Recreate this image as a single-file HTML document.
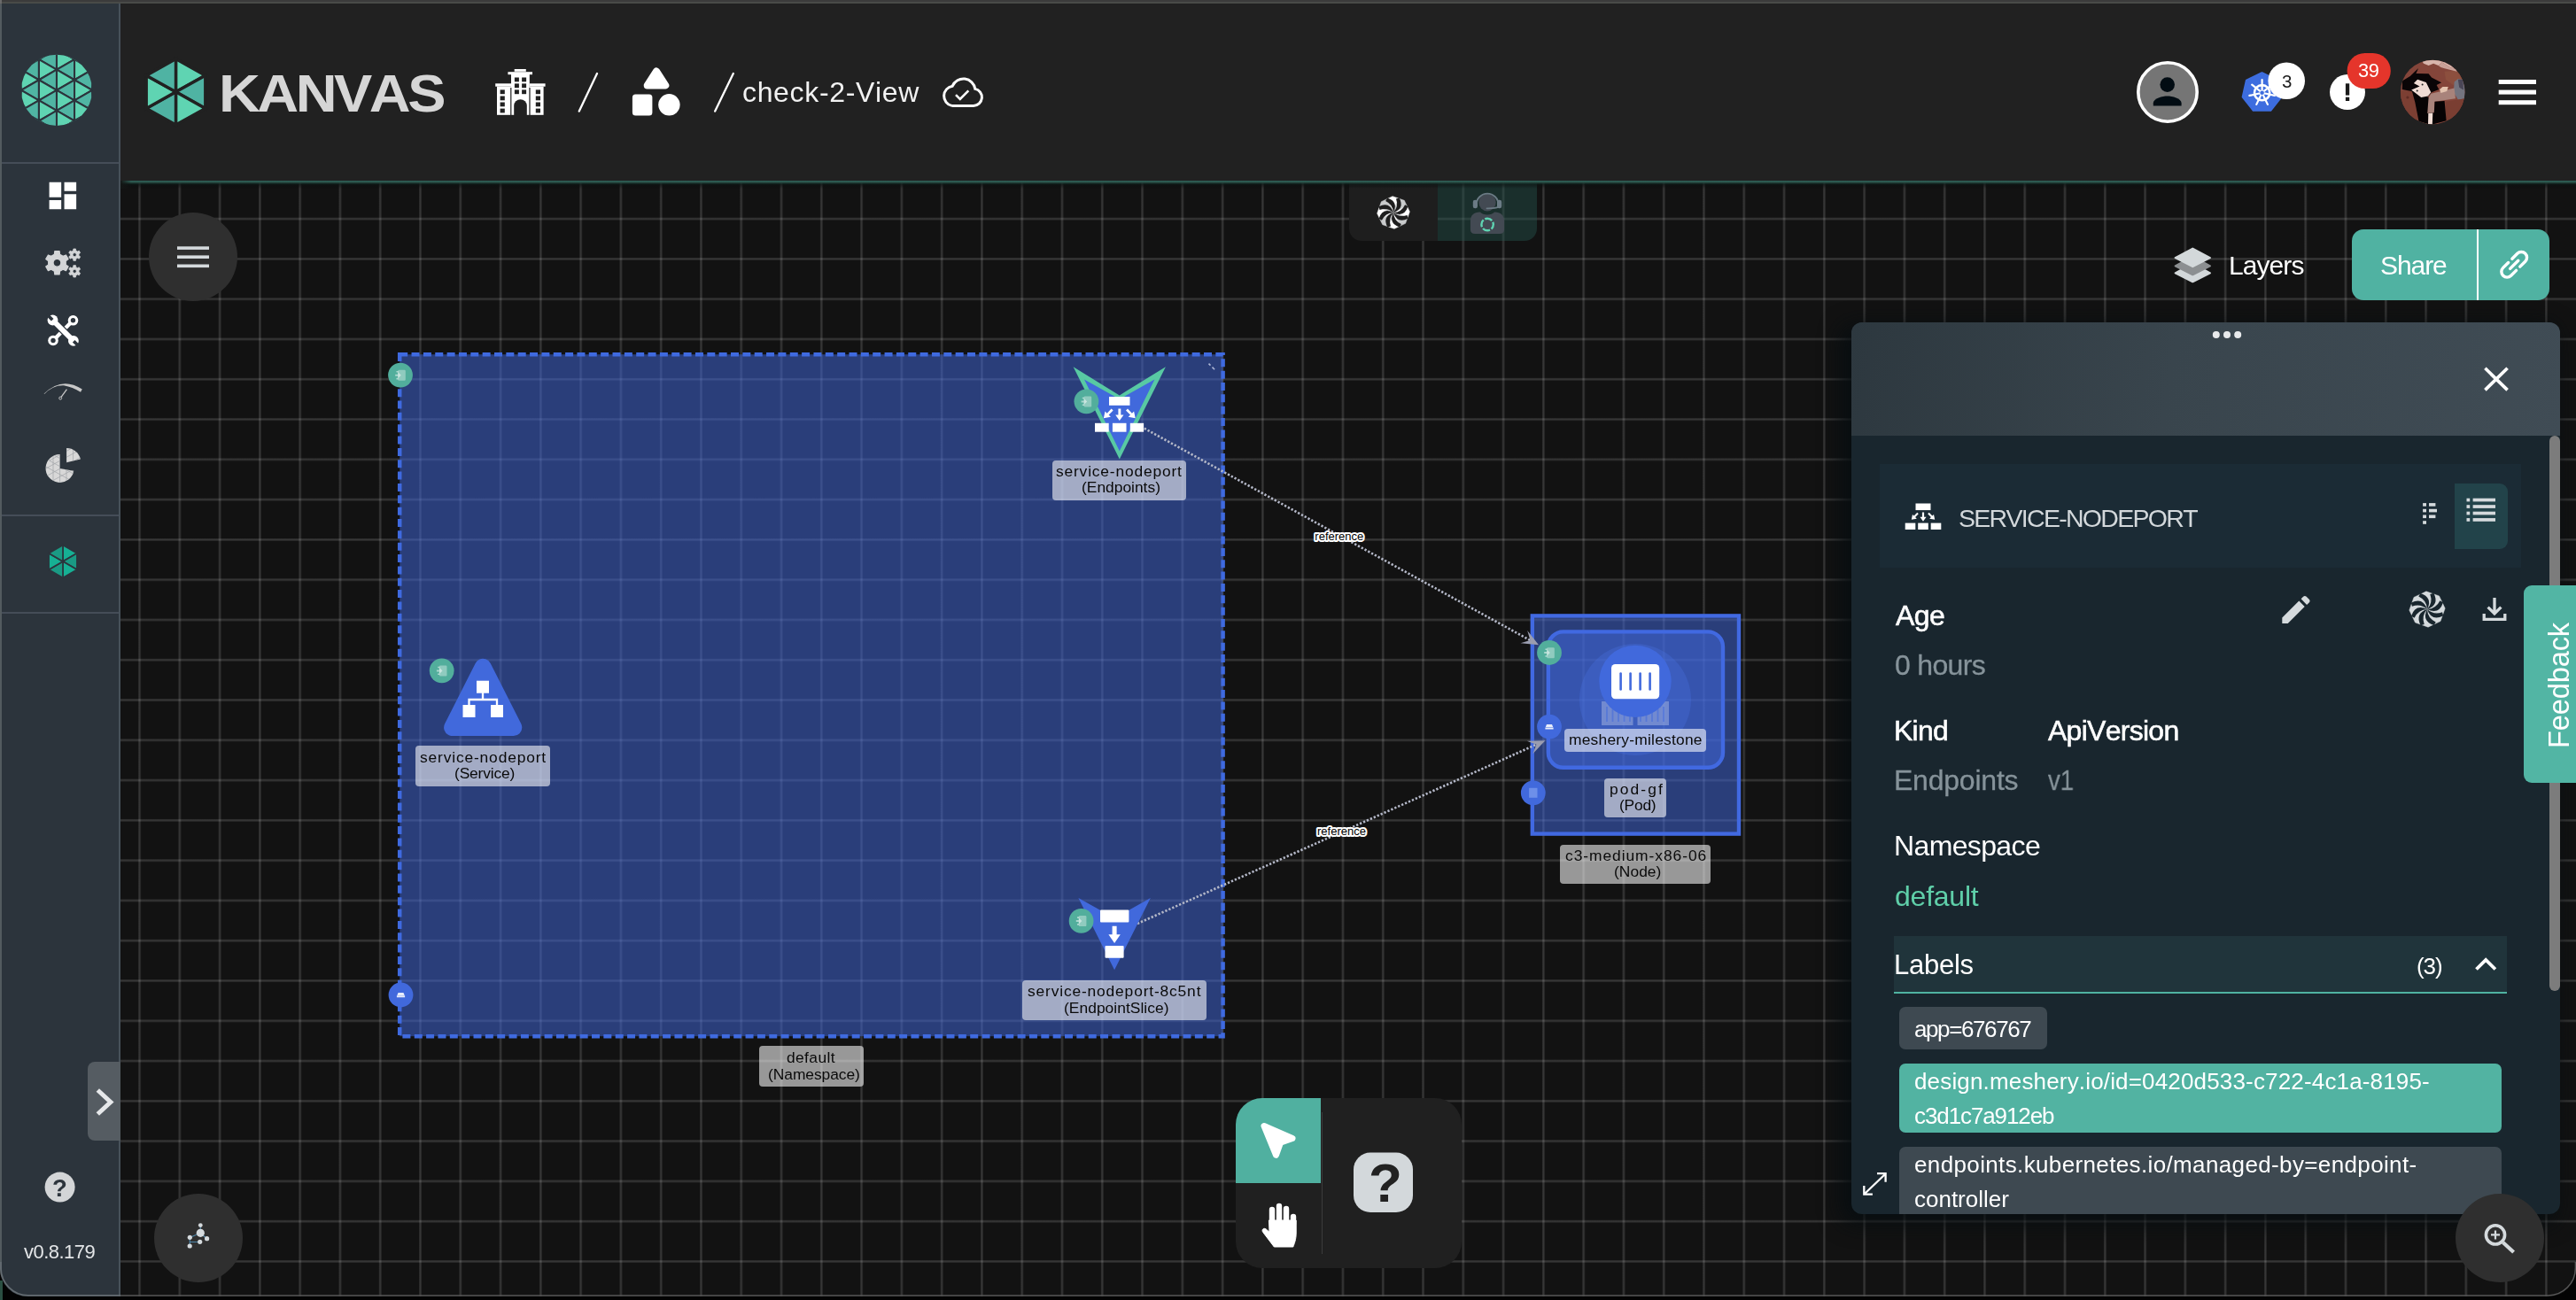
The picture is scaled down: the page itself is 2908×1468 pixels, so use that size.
<!DOCTYPE html><html><head><meta charset="utf-8"><title>Kanvas</title><style>
*{box-sizing:border-box}
html,body{margin:0;padding:0}
body{width:2908px;height:1468px;overflow:hidden;background:#030303;position:relative;font-family:'Liberation Sans',sans-serif;font-kerning:none}
.a{position:absolute}
.t{position:absolute;white-space:pre;line-height:1;font-kerning:none;will-change:transform}
svg{position:absolute;overflow:visible}
#win{position:absolute;left:0;top:0;width:2908px;height:1463.6px;overflow:hidden;background:#121212;border-radius:0 0 31px 31px}
#grid{position:absolute;left:136px;top:203px;width:2772px;height:1261px;background-color:#121212;
 background-image:linear-gradient(to right,rgba(255,255,255,.03) 0,rgba(255,255,255,.152) .7px,rgba(255,255,255,.152) 2.1px,rgba(255,255,255,.03) 2.8px,transparent 2.9px),linear-gradient(to bottom,rgba(255,255,255,.03) 0,rgba(255,255,255,.152) .7px,rgba(255,255,255,.152) 2.1px,rgba(255,255,255,.03) 2.8px,transparent 2.9px);
 background-size:45.285px 45.285px;background-position:20.15px 42.75px}
.lbl{position:absolute;background:rgba(255,255,255,.57);border-radius:4px}
</style></head><body><div id="win"><div id="grid"></div><svg class="a" style="left:0;top:0" width="2908" height="1468" viewBox="0 0 2908 1468"><rect x="451.2" y="400.2" width="929.4" height="770" fill="rgba(65,105,225,.5)" stroke="#3f6ae0" stroke-width="4.5" stroke-dasharray="9 4.35"/><path d="M1364.5 410.6l2 2M1368.5 414.6l2.6 2.6" stroke="#aab4d4" stroke-width="1.6"/><rect x="1729.8" y="695.4" width="233.2" height="246.2" fill="rgba(65,105,225,.5)" stroke="#4169e1" stroke-width="4.4"/><rect x="1747.8" y="713.4" width="197.2" height="153.4" rx="17" fill="rgba(65,105,225,.5)" stroke="#4169e1" stroke-width="4.4"/><circle cx="1846" cy="790" r="63" fill="rgba(75,120,235,.28)"/><g fill="rgba(255,255,255,.28)"><rect x="1808" y="792" width="35.5" height="27"/><rect x="1848.5" y="792" width="35.5" height="27"/></g><g stroke="rgba(65,105,220,.55)" stroke-width="1.8"><path d="M1814 798v17"/><path d="M1820.5 798v17"/><path d="M1827 798v17"/><path d="M1833.5 798v17"/><path d="M1840 798v17"/><path d="M1852 798v17"/><path d="M1858.5 798v17"/><path d="M1865 798v17"/><path d="M1871.5 798v17"/><path d="M1878 798v17"/></g><circle cx="1846" cy="769.4" r="40.7" fill="#4169dc"/><rect x="1819" y="750" width="54.2" height="39.3" rx="4.5" fill="#fff"/><g stroke="#4169dc" stroke-width="2.6" stroke-linecap="round"><path d="M1829.6 760.5v18"/><path d="M1840.6 760.5v18"/><path d="M1851.6 760.5v18"/><path d="M1862.6 760.5v18"/></g><line x1="1280.5" y1="477.5" x2="1729.1" y2="724.0" stroke="#b4b8c8" stroke-width="2.6" stroke-dasharray="2.3 2"/><polygon points="1737.0,728.3 1724.2,712.1 1727.4,723.0 1716.5,726.2" fill="#9a9db0"/><line x1="1284" y1="1043" x2="1736.2" y2="839.9" stroke="#b4b8c8" stroke-width="2.6" stroke-dasharray="2.3 2"/><polygon points="1744.4,836.2 1723.8,836.7 1734.4,840.7 1730.3,851.3" fill="#9a9db0"/><polygon points="1211.6,414.3 1263.8,446.4 1315.9,414.3 1263.8,518.4" fill="#58c9a3"/><polygon points="1224,428.4 1263.8,450.8 1303.4,428.4 1263.8,509.2" fill="#4169dc"/><g fill="#fff"><rect x="1252" y="448" width="23.5" height="9.8"/><rect x="1236" y="477.8" width="15.7" height="9.9"/><rect x="1255.9" y="477.8" width="15.6" height="9.9"/><rect x="1275.8" y="477.8" width="15.3" height="9.9"/><path d="M1262.4 461.5h2.9v7h3.2l-4.7 6.6l-4.6-6.6h3.2z"/><path d="M1254.6 461.6l2 2l-5 5l2.3 2.2l-8 1.5l1.6-7.8l2.2 2.2z"/><path d="M1273 461.6l-2 2l5 5l-2.3 2.2l8 1.5l-1.6-7.8l-2.2 2.2z"/></g><polygon points="545.2,753.2 510.6,821.6 579.8,821.6" fill="#4169dc" stroke="#4169dc" stroke-width="19" stroke-linejoin="round"/><g fill="#fff"><rect x="538" y="768.7" width="14" height="14"/><rect x="522.5" y="796" width="14" height="14"/><rect x="554" y="796" width="14" height="14"/></g><path d="M545 782v8M529.5 797v-7h31.5v7" stroke="#fff" stroke-width="2.3" fill="none"/><polygon points="1217.4,1014 1258.1,1036.8 1298.8,1014 1258.1,1095.2" fill="#4169dc"/><g fill="#fff"><rect x="1242" y="1027.4" width="32.4" height="14" rx="1"/><rect x="1247.5" y="1067.9" width="21.1" height="13.8" rx="1"/><path d="M1255.6 1045.7h5v9.5h4.2l-6.7 9.8l-6.7-9.8h4.2z"/></g><circle cx="452" cy="423.6" r="13.9" fill="#52ae9c"/><path d="M450.4 417.8h6.2a1.2 1.2 0 0 1 1.2 1.2v9.6a1.2 1.2 0 0 1-1.2 1.2h-6.2a1.2 1.2 0 0 1-1.2-1.2v-9.6a1.2 1.2 0 0 1 1.2-1.2z" fill="rgba(255,255,255,.36)"/><path d="M446.2 422.70000000000005h3v-2.6l3.6 3.6l-3.6 3.6v-2.6h-3z M447.4 419.0h2.4v1.6h-2.4z M447.4 426.8h2.4v1.6h-2.4z" fill="rgba(255,255,255,.5)"/><circle cx="1226.4" cy="453.3" r="13.9" fill="#52ae9c"/><path d="M1224.8000000000002 447.5h6.2a1.2 1.2 0 0 1 1.2 1.2v9.6a1.2 1.2 0 0 1-1.2 1.2h-6.2a1.2 1.2 0 0 1-1.2-1.2v-9.6a1.2 1.2 0 0 1 1.2-1.2z" fill="rgba(255,255,255,.36)"/><path d="M1220.6000000000001 452.40000000000003h3v-2.6l3.6 3.6l-3.6 3.6v-2.6h-3z M1221.8000000000002 448.7h2.4v1.6h-2.4z M1221.8000000000002 456.5h2.4v1.6h-2.4z" fill="rgba(255,255,255,.5)"/><circle cx="498.7" cy="757.3" r="13.9" fill="#52ae9c"/><path d="M497.09999999999997 751.5h6.2a1.2 1.2 0 0 1 1.2 1.2v9.6a1.2 1.2 0 0 1-1.2 1.2h-6.2a1.2 1.2 0 0 1-1.2-1.2v-9.6a1.2 1.2 0 0 1 1.2-1.2z" fill="rgba(255,255,255,.36)"/><path d="M492.9 756.4h3v-2.6l3.6 3.6l-3.6 3.6v-2.6h-3z M494.09999999999997 752.6999999999999h2.4v1.6h-2.4z M494.09999999999997 760.5h2.4v1.6h-2.4z" fill="rgba(255,255,255,.5)"/><circle cx="1220.6" cy="1039.9" r="13.9" fill="#52ae9c"/><path d="M1219.0 1034.1000000000001h6.2a1.2 1.2 0 0 1 1.2 1.2v9.6a1.2 1.2 0 0 1-1.2 1.2h-6.2a1.2 1.2 0 0 1-1.2-1.2v-9.6a1.2 1.2 0 0 1 1.2-1.2z" fill="rgba(255,255,255,.36)"/><path d="M1214.8 1039.0h3v-2.6l3.6 3.6l-3.6 3.6v-2.6h-3z M1216.0 1035.3000000000002h2.4v1.6h-2.4z M1216.0 1043.1000000000001h2.4v1.6h-2.4z" fill="rgba(255,255,255,.5)"/><circle cx="1749" cy="737" r="13.9" fill="#52ae9c"/><path d="M1747.4 731.2h6.2a1.2 1.2 0 0 1 1.2 1.2v9.6a1.2 1.2 0 0 1-1.2 1.2h-6.2a1.2 1.2 0 0 1-1.2-1.2v-9.6a1.2 1.2 0 0 1 1.2-1.2z" fill="rgba(255,255,255,.36)"/><path d="M1743.2 736.1h3v-2.6l3.6 3.6l-3.6 3.6v-2.6h-3z M1744.4 732.4h2.4v1.6h-2.4z M1744.4 740.2h2.4v1.6h-2.4z" fill="rgba(255,255,255,.5)"/><circle cx="1749" cy="820.6" r="13.9" fill="#4169dc"/><path d="M1746 818.0h6l1.2 3h-8.4z M1744.4 821.4h9.2v2h-9.2z" fill="#e8edfb"/><circle cx="1730.8" cy="895.3" r="13.9" fill="#4169dc"/><rect x="1726.1" y="889.8" width="9.4" height="11" fill="#6d8fe9"/><circle cx="452.5" cy="1123.5" r="13.9" fill="#4169dc"/><path d="M449.5 1120.9h6l1.2 3h-8.4z M447.9 1124.3h9.2v2h-9.2z" fill="#e8edfb"/><text x="1511.8" y="609.5" text-anchor="middle" font-family="Liberation Sans, sans-serif" font-size="13" fill="#000" stroke="#fff" stroke-width="4" stroke-linejoin="round" paint-order="stroke">reference</text><text x="1514.5" y="943.3" text-anchor="middle" font-family="Liberation Sans, sans-serif" font-size="13" fill="#000" stroke="#fff" stroke-width="4" stroke-linejoin="round" paint-order="stroke">reference</text></svg><div class="lbl" style="left:1188px;top:520.2px;width:151.2px;height:44.8px"></div><div class="t" style="left:1192.40px;top:524.47px;font-size:17.4px;color:#0a0a0a;font-weight:400;letter-spacing:0.821px;">service-nodeport</div><div class="t" style="left:1221.20px;top:542.47px;font-size:17.4px;color:#0a0a0a;font-weight:400;letter-spacing:0.001px;">(Endpoints)</div><div class="lbl" style="left:469px;top:842px;width:151.8px;height:45.5px"></div><div class="t" style="left:473.70px;top:847.47px;font-size:17.4px;color:#0a0a0a;font-weight:400;letter-spacing:0.841px;">service-nodeport</div><div class="t" style="left:513.00px;top:865.47px;font-size:17.4px;color:#0a0a0a;font-weight:400;letter-spacing:-0.162px;">(Service)</div><div class="lbl" style="left:1154px;top:1107px;width:208.0px;height:44.7px"></div><div class="t" style="left:1159.70px;top:1111.47px;font-size:17.4px;color:#0a0a0a;font-weight:400;letter-spacing:0.838px;">service-nodeport-8c5nt</div><div class="t" style="left:1201.20px;top:1129.77px;font-size:17.4px;color:#0a0a0a;font-weight:400;letter-spacing:0.036px;">(EndpointSlice)</div><div class="lbl" style="left:857px;top:1181.3px;width:117.9px;height:45.9px"></div><div class="t" style="left:888.40px;top:1186.07px;font-size:17.4px;color:#0a0a0a;font-weight:400;letter-spacing:0.385px;">default</div><div class="t" style="left:866.50px;top:1204.67px;font-size:17.4px;color:#0a0a0a;font-weight:400;letter-spacing:-0.049px;">(Namespace)</div><div class="lbl" style="left:1766px;top:822.5px;width:160.4px;height:26.3px"></div><div class="t" style="left:1771.10px;top:826.57px;font-size:17.4px;color:#0a0a0a;font-weight:400;letter-spacing:0.226px;">meshery-milestone</div><div class="lbl" style="left:1811.2px;top:878.7px;width:70.1px;height:44.3px"></div><div class="t" style="left:1816.50px;top:883.37px;font-size:17.4px;color:#0a0a0a;font-weight:400;letter-spacing:2.082px;">pod-gf</div><div class="t" style="left:1827.80px;top:900.77px;font-size:17.4px;color:#0a0a0a;font-weight:400;letter-spacing:-0.223px;">(Pod)</div><div class="lbl" style="left:1761.4px;top:953.5px;width:169.7px;height:44.8px"></div><div class="t" style="left:1766.90px;top:958.07px;font-size:17.4px;color:#0a0a0a;font-weight:400;letter-spacing:0.947px;">c3-medium-x86-06</div><div class="t" style="left:1822.30px;top:975.57px;font-size:17.4px;color:#0a0a0a;font-weight:400;letter-spacing:0.042px;">(Node)</div><div class="a" style="left:168px;top:240px;width:100px;height:100px;border-radius:50%;background:#2f2f2f"></div><div class="a" style="left:174px;top:1348px;width:100px;height:100px;border-radius:50%;background:#2f2f2f"></div><svg class="a" style="left:0;top:0" width="2908" height="1468" viewBox="0 0 2908 1468"><g fill="#d5dadd"><rect x="200" y="278.3" width="36" height="3.6"/><rect x="200" y="288.4" width="36" height="3.6"/><rect x="200" y="298.5" width="36" height="3.6"/></g><g stroke="#4f86a8" stroke-width="1.2" fill="none"><path d="M226.3 1392.3l0-8.5M226.3 1392.3l-12 5.2M226.3 1392.3l7 6.5M214.3 1397.5v9.5M214.3 1402.5h11.5"/></g><g fill="#d5dadd"><circle cx="226.3" cy="1392.3" r="4.6"/><circle cx="226.3" cy="1383.6" r="2.4"/><circle cx="214.3" cy="1397.3" r="2.6"/><circle cx="233.6" cy="1398.7" r="2.6"/><circle cx="225.7" cy="1402.3" r="2.6"/><circle cx="214.2" cy="1407" r="2.6"/></g></svg><div class="a" style="left:1523px;top:207px;width:100px;height:65px;background:#1e1e1e;border-radius:0 0 0 14px"></div><div class="a" style="left:1623px;top:207px;width:112px;height:65px;background:rgba(38,88,80,.42);border-radius:0 0 14px 0"></div><svg class="a" style="left:0;top:0" width="2908" height="1468" viewBox="0 0 2908 1468"><polygon points="1573.00,240.00 1565.68,224.66 1572.04,221.63 1578.67,223.98" fill="#ffffff" stroke="#ffffff" stroke-width="0.5"/><polygon points="1573.00,240.00 1578.67,223.98 1585.31,226.33 1588.34,232.68" fill="#c9cbcc" stroke="#c9cbcc" stroke-width="0.5"/><polygon points="1573.00,240.00 1588.34,232.68 1591.37,239.04 1589.02,245.67" fill="#ffffff" stroke="#ffffff" stroke-width="0.5"/><polygon points="1573.00,240.00 1589.02,245.67 1586.67,252.31 1580.32,255.34" fill="#c9cbcc" stroke="#c9cbcc" stroke-width="0.5"/><polygon points="1573.00,240.00 1580.32,255.34 1573.96,258.37 1567.33,256.02" fill="#ffffff" stroke="#ffffff" stroke-width="0.5"/><polygon points="1573.00,240.00 1567.33,256.02 1560.69,253.67 1557.66,247.32" fill="#c9cbcc" stroke="#c9cbcc" stroke-width="0.5"/><polygon points="1573.00,240.00 1557.66,247.32 1554.63,240.96 1556.98,234.33" fill="#ffffff" stroke="#ffffff" stroke-width="0.5"/><polygon points="1573.00,240.00 1556.98,234.33 1559.33,227.69 1565.68,224.66" fill="#c9cbcc" stroke="#c9cbcc" stroke-width="0.5"/><path d="M1579.69 223.45Q1585.90 235.59 1573.00 240.00Q1579.21 233.15 1576.02 224.47Z" fill="#1e1e1e"/><path d="M1589.43 233.03Q1585.24 246.00 1573.00 240.00Q1582.23 239.54 1586.12 231.15Z" fill="#1e1e1e"/><path d="M1589.55 246.69Q1577.41 252.90 1573.00 240.00Q1579.85 246.21 1588.53 243.02Z" fill="#1e1e1e"/><path d="M1579.97 256.43Q1567.00 252.24 1573.00 240.00Q1573.46 249.23 1581.85 253.12Z" fill="#1e1e1e"/><path d="M1566.31 256.55Q1560.10 244.41 1573.00 240.00Q1566.79 246.85 1569.98 255.53Z" fill="#1e1e1e"/><path d="M1556.57 246.97Q1560.76 234.00 1573.00 240.00Q1563.77 240.46 1559.88 248.85Z" fill="#1e1e1e"/><path d="M1556.45 233.31Q1568.59 227.10 1573.00 240.00Q1566.15 233.79 1557.47 236.98Z" fill="#1e1e1e"/><path d="M1566.03 223.57Q1579.00 227.76 1573.00 240.00Q1572.54 230.77 1564.15 226.88Z" fill="#1e1e1e"/><g><circle cx="1679" cy="228.7" r="9.7" fill="#434a53"/><path d="M1666.7 231a12.4 12.4 0 0 1 24.8 0" fill="none" stroke="#6b7b85" stroke-width="1.9"/><rect x="1662.8" y="225.7" width="5.2" height="9.6" rx="2.4" fill="#6b7b85"/><rect x="1690" y="225.7" width="5.2" height="9.6" rx="2.4" fill="#6b7b85"/><path d="M1691.5 233.8q-3 1.6-13 1.5" fill="none" stroke="#6b7b85" stroke-width="1.8" stroke-linecap="round"/><path d="M1659.9 259v-9c0-7 4-10.5 10.5-10.5h0.6a9.3 6.2 0 0 0 16 0h0.6c6.5 0 10.5 3.5 10.5 10.5v9c0 3.4-1.8 5-5 5h-28.200000000000003c-3.2 0-5-1.6-5-5z" fill="#434a53"/><circle cx="1679.1" cy="253.5" r="6.7" fill="none" stroke="#5fd4b2" stroke-width="2.4" stroke-dasharray="8.6 1.9" stroke-dashoffset="3"/></g></svg><div class="a" style="left:2654.9px;top:258.9px;width:223.2px;height:80px;background:#50b2a2;border-radius:13px"></div><div class="a" style="left:2796px;top:258.9px;width:2.4px;height:80px;background:#fff"></div><div class="t" style="left:2516.40px;top:284.71px;font-size:30px;color:#fff;font-weight:400;letter-spacing:-0.920px;">Layers</div><div class="t" style="left:2687.20px;top:284.71px;font-size:30px;color:#fff;font-weight:400;letter-spacing:-1.075px;">Share</div><svg class="a" style="left:0;top:0" width="2908" height="1468" viewBox="0 0 2908 1468"><path d="M2475.3 297.5l-19.7 10.8l19.7 10l19.7-10z" fill="#d3d8da" stroke="#d3d8da" stroke-width="2" stroke-linejoin="round"/><path d="M2475.3 289.5l-19.7 10.8l19.7 10l19.7-10z" fill="#8c8f91" stroke="#8c8f91" stroke-width="2" stroke-linejoin="round"/><path d="M2475.3 280.6l-19.7 10.6l19.7 10l19.7-10z" fill="#d3d8da" stroke="#d3d8da" stroke-width="2" stroke-linejoin="round"/><g transform="translate(2838.2 298.8) rotate(-45)" fill="none" stroke="#fff" stroke-width="3.4" stroke-linecap="round"><path d="M-3 -6.3h-8.4a6.3 6.3 0 0 0 0 12.6h8.4"/><path d="M3 -6.3h8.4a6.3 6.3 0 0 1 0 12.6h-8.4"/><path d="M-6.5 0h13"/></g></svg><div class="a" style="left:1395px;top:1239.8px;width:255.3px;height:192.2px;background:#202020;border-radius:30px;overflow:hidden"><div class="a" style="left:0;top:0;width:96px;height:96.2px;background:#50b0a0"></div><div class="a" style="left:96.6px;top:16px;width:1.4px;height:160px;background:#3c3c3c"></div></div><svg class="a" style="left:0;top:0" width="2908" height="1468" viewBox="0 0 2908 1468"><path d="M1427 1271.5l32 14l-13.5 4.8l-5 14z" fill="#fff" stroke="#fff" stroke-width="7" stroke-linejoin="round"/><rect x="1528" y="1301.6" width="67" height="67.4" rx="19" fill="#d3d8db"/><g fill="#fff" stroke="#fff" stroke-linecap="round"><path d="M1436 1380v-14M1444 1378v-16M1452 1379v-14M1460 1382v-8" stroke-width="6.4" fill="none"/><path d="M1432.8 1378h30.4v14c0 8-2 12-3.4 16h-21.5l-12.5-16.5c-2-2.6 0.5-5.5 3.3-3.6l3.7 3.2z" stroke-width="1"/></g></svg><div class="t" style="left:1545.28px;top:1304.52px;font-size:62px;color:#222;font-weight:700;letter-spacing:0.000px;">?</div><div class="a" style="left:136px;top:4px;width:2772px;height:199.6px;background:#212121"></div><div class="a" style="left:136px;top:203.6px;width:2772px;height:9px;background:linear-gradient(to bottom,#2c5a52 0,#2e5f57 1px,#27493f 2.1px,rgba(22,48,43,.8) 3.1px,rgba(12,20,19,.6) 4.6px,rgba(10,14,14,.3) 6.5px,transparent 9px)"></div><div class="a" style="left:136px;top:203.6px;width:12px;height:9px;background:linear-gradient(to right,#141716 0,rgba(20,23,22,.6) 5px,transparent 12px)"></div><svg class="a" style="left:0;top:0" width="2908" height="1468" viewBox="0 0 2908 1468"><polygon points="198.5,103.8 198.50,66.60 231.80,85.20" fill="#5fd4b2" stroke="#212121" stroke-width="3.4" stroke-linejoin="miter"/><polygon points="198.5,103.8 231.80,85.20 231.80,122.40" fill="#4fb3a3" stroke="#212121" stroke-width="3.4" stroke-linejoin="miter"/><polygon points="198.5,103.8 231.80,122.40 198.50,141.00" fill="#5fd4b2" stroke="#212121" stroke-width="3.4" stroke-linejoin="miter"/><polygon points="198.5,103.8 198.50,141.00 165.20,122.40" fill="#4fb3a3" stroke="#212121" stroke-width="3.4" stroke-linejoin="miter"/><polygon points="198.5,103.8 165.20,122.40 165.20,85.20" fill="#5fd4b2" stroke="#212121" stroke-width="3.4" stroke-linejoin="miter"/><polygon points="198.5,103.8 165.20,85.20 198.50,66.60" fill="#4fb3a3" stroke="#212121" stroke-width="3.4" stroke-linejoin="miter"/><g fill="#fff"><rect x="580.7" y="78" width="13.1" height="2.8"/><rect x="573.4" y="81.2" width="27.6" height="3"/><rect x="577" y="84" width="20.8" height="45.8"/><rect x="559.2" y="94.3" width="17.8" height="3.4"/><rect x="597.8" y="94.3" width="17.8" height="3.4"/><rect x="561" y="97.7" width="16" height="32.1"/><rect x="597.8" y="97.7" width="15.8" height="32.1"/></g><g fill="#212121"><rect x="580.9" y="87.5" width="5" height="4.8"/><rect x="580.9" y="94.4" width="5" height="4.8"/><rect x="580.9" y="101.4" width="5" height="4.8"/><rect x="589.1" y="87.5" width="5" height="4.8"/><rect x="589.1" y="94.4" width="5" height="4.8"/><rect x="589.1" y="101.4" width="5" height="4.8"/><rect x="564.6" y="101.4" width="5.2" height="4.8"/><rect x="564.6" y="108.5" width="5.2" height="4.8"/><rect x="564.6" y="115.5" width="5.2" height="4.8"/><rect x="564.6" y="122.6" width="5.2" height="4.8"/><rect x="604.8" y="101.4" width="5.2" height="4.8"/><rect x="604.8" y="108.5" width="5.2" height="4.8"/><rect x="604.8" y="115.5" width="5.2" height="4.8"/><rect x="604.8" y="122.6" width="5.2" height="4.8"/><path d="M580.2 130v-10.5a7.3 7.3 0 0 1 14.6 0v10.5z"/><rect x="576.2" y="99" width="1.2" height="31"/><rect x="597.4" y="99" width="1.2" height="31"/></g><path d="M653.8 125.6L674 83M807.2 125.6L827.8 83" stroke="#fff" stroke-width="2.3" stroke-linecap="round"/><g fill="#fff" stroke="#fff" stroke-linejoin="round"><path d="M741 80.5l10.3 16h-20.6z" stroke-width="8"/><rect x="717.4" y="110.1" width="15.5" height="16.9" stroke-width="7"/><circle cx="755.4" cy="118.3" r="12.2" stroke="none"/></g><g transform="translate(-1.5 1.6)"><path d="M1076 117.8h24.5a9.6 9.6 0 0 0 1.8-19a13.4 13.4 0 0 0-25.6-3.2a11.3 11.3 0 0 0-0.7 22.2z" fill="none" stroke="#fff" stroke-width="3"/><path d="M1080.5 105.5l4.8 4.8l9.5-9.5" fill="none" stroke="#fff" stroke-width="2.6"/></g><circle cx="2447" cy="104" r="33.2" fill="#757575" stroke="#fff" stroke-width="3.6"/><circle cx="2446.7" cy="95.6" r="8.3" fill="#020c13"/><path d="M2430.8 119.6v-3.4c0-5.2 10.6-7.8 15.9-7.8s15.9 2.6 15.9 7.8v3.4z" fill="#020c13"/><polygon points="2553.5,82.4 2570.9,90.8 2575.1,109.5 2563.1,124.6 2543.9,124.6 2531.9,109.5 2536.1,90.8" fill="#3d6ddf" stroke="#3d6ddf" stroke-width="2.5" stroke-linejoin="round"/><circle cx="2553.6" cy="104.7" r="8.6" fill="none" stroke="#fff" stroke-width="2.6"/><path d="M2553.6 104.7L2553.6 90.1M2553.6 104.7L2565.0 95.6M2553.6 104.7L2567.8 107.9M2553.6 104.7L2559.9 117.9M2553.6 104.7L2547.3 117.9M2553.6 104.7L2539.4 107.9M2553.6 104.7L2542.2 95.6" stroke="#fff" stroke-width="2.2" stroke-linecap="round"/><circle cx="2553.6" cy="104.7" r="2.3" fill="#3d6ddf"/><circle cx="2581.2" cy="91.3" r="20.8" fill="#fff"/><circle cx="2650" cy="104.1" r="20" fill="#fff"/><rect x="2647.9" y="94.3" width="4.3" height="13.3" fill="#1a1a1a"/><rect x="2647.9" y="109.7" width="4.3" height="4.3" fill="#1a1a1a"/><rect x="2649.6" y="59.9" width="49.2" height="40.1" rx="20" fill="#e5352b"/><clipPath id="av"><circle cx="2746.2" cy="104" r="36.3"/></clipPath><g clip-path="url(#av)"><rect x="2708" y="66" width="76" height="76" fill="#84453a"/><polygon points="2759.6,80.8 2776.2,79.4 2783.1,89.1 2769.3,96.0 2760.9,89.8" fill="#8c4f3e"/><polygon points="2733.2,67.6 2769.3,67.6 2774.8,78.0 2766.5,76.6 2756.8,70.4 2752.6,73.9 2747.1,71.8 2741.6,73.9 2736.0,71.8" fill="#d8b4ab"/><polygon points="2752.6,73.9 2756.8,70.4 2766.5,76.6 2774.8,78.0 2773.4,80.8 2759.6,77.3 2755.4,75.9" fill="#c9a198"/><polygon points="2770.6,92.5 2774.8,89.1 2783.1,90.5 2783.1,111.2 2774.8,112.6 2769.9,104.3" fill="#74747f"/><polygon points="2774.8,89.8 2780.3,89.8 2781.0,101.6 2776.2,98.8" fill="#4a4656"/><polygon points="2709.7,102.9 2722.9,101.6 2726.3,115.4 2729.8,136.2 2722.9,137.6 2709.7,122.3" fill="#7c3f33"/><polygon points="2760.9,114.7 2783.1,111.2 2783.1,129.3 2760.9,136.2" fill="#7a3e32"/><polygon points="2740.2,112.6 2744.3,105.7 2770.6,99.5 2772.0,111.2 2748.5,114.7 2747.8,127.2 2740.2,127.9" fill="#a8837b"/><polygon points="2722.9,102.9 2741.6,109.9 2740.2,127.9 2747.8,127.2 2748.5,114.7 2759.6,114.0 2761.6,136.2 2744.3,141.0 2730.5,136.9 2726.3,115.4" fill="#070304"/><polygon points="2730.1,77.0 2727.4,82.9 2741.6,83.2 2745.0,87.4 2756.1,93.2 2750.6,96.0 2753.3,100.9 2745.0,104.3 2738.8,111.2 2729.1,108.5 2722.2,102.9 2711.8,100.9 2712.1,91.2 2720.8,86.0" fill="#0a0506"/><polygon points="2729.1,89.8 2738.8,92.9 2744.3,104.3 2740.9,108.5 2733.2,110.0 2722.2,101.6 2731.5,97.4 2724.9,93.9" fill="#f0dcd4"/><polygon points="2754.0,100.9 2757.5,98.1 2763.7,98.1 2762.3,102.9 2755.4,105.0" fill="#e3c2ae"/><polygon points="2741.3,127.9 2746.3,127.5 2745.8,140.7 2741.0,140.7" fill="#f1ddd5"/><circle cx="2734.6" cy="95.6" r="1" fill="#222"/><circle cx="2728.7" cy="102.6" r="1" fill="#222"/><circle cx="2717.9" cy="110" r="1.6" fill="#5e2c24"/></g><g fill="#fff"><rect x="2820.7" y="90" width="42.3" height="5"/><rect x="2820.7" y="101.6" width="42.3" height="5"/><rect x="2820.7" y="113.2" width="42.3" height="5"/></g></svg><div class="t" style="left:246.56px;top:77.36px;font-size:59px;color:#d6d6d6;font-weight:700;letter-spacing:-3.204px;transform:scaleX(1.1);transform-origin:0 0;">KANVAS</div><div class="t" style="left:838.48px;top:87.61px;font-size:32px;color:#f2f2f2;font-weight:400;letter-spacing:0.658px;">check-2-View</div><div class="t" style="left:2575.82px;top:81.55px;font-size:20.5px;color:#1c1c1c;font-weight:400;letter-spacing:0.000px;">3</div><div class="t" style="left:2661.87px;top:69.35px;font-size:21.8px;color:#fff;font-weight:400;letter-spacing:-0.344px;">39</div><div class="a" style="left:2px;top:4px;width:134px;height:1462px;background:#2c343c;border-right:2px solid #47515a"></div><div class="a" style="left:0;top:0;width:2px;height:1468px;background:#535b5f"></div><div class="a" style="left:2px;top:183.1px;width:132px;height:1.8px;background:#454d58"></div><div class="a" style="left:2px;top:581.1px;width:132px;height:1.8px;background:#454d58"></div><div class="a" style="left:2px;top:691.3px;width:132px;height:1.8px;background:#454d58"></div><div class="a" style="left:98.8px;top:1199px;width:37px;height:89px;background:#555c62;border-radius:8px 0 0 8px"></div><svg class="a" style="left:0;top:0" width="2908" height="1468" viewBox="0 0 2908 1468"><clipPath id="ml"><circle cx="64" cy="101.8" r="40.1"/></clipPath><g clip-path="url(#ml)"><polygon points="-16.19,-13.95 -16.19,9.20 3.85,-2.38" fill="#5fd4b2" stroke="#2c343c" stroke-width="2.1"/><polygon points="3.85,-2.38 3.85,20.77 -16.19,9.20" fill="#50b5a3" stroke="#2c343c" stroke-width="2.1"/><polygon points="-16.19,9.20 -16.19,32.35 3.85,20.78" fill="#5fd4b2" stroke="#2c343c" stroke-width="2.1"/><polygon points="3.85,20.78 3.85,43.92 -16.19,32.35" fill="#50b5a3" stroke="#2c343c" stroke-width="2.1"/><polygon points="-16.19,32.35 -16.19,55.50 3.85,43.93" fill="#5fd4b2" stroke="#2c343c" stroke-width="2.1"/><polygon points="3.85,43.93 3.85,67.08 -16.19,55.50" fill="#50b5a3" stroke="#2c343c" stroke-width="2.1"/><polygon points="-16.19,55.50 -16.19,78.65 3.85,67.08" fill="#5fd4b2" stroke="#2c343c" stroke-width="2.1"/><polygon points="3.85,67.08 3.85,90.22 -16.19,78.65" fill="#50b5a3" stroke="#2c343c" stroke-width="2.1"/><polygon points="-16.19,78.65 -16.19,101.80 3.85,90.23" fill="#5fd4b2" stroke="#2c343c" stroke-width="2.1"/><polygon points="3.85,90.23 3.85,113.38 -16.19,101.80" fill="#50b5a3" stroke="#2c343c" stroke-width="2.1"/><polygon points="-16.19,101.80 -16.19,124.95 3.85,113.38" fill="#5fd4b2" stroke="#2c343c" stroke-width="2.1"/><polygon points="3.85,113.38 3.85,136.52 -16.19,124.95" fill="#50b5a3" stroke="#2c343c" stroke-width="2.1"/><polygon points="-16.19,124.95 -16.19,148.10 3.85,136.52" fill="#5fd4b2" stroke="#2c343c" stroke-width="2.1"/><polygon points="3.85,136.52 3.85,159.67 -16.19,148.10" fill="#50b5a3" stroke="#2c343c" stroke-width="2.1"/><polygon points="-16.19,148.10 -16.19,171.25 3.85,159.67" fill="#5fd4b2" stroke="#2c343c" stroke-width="2.1"/><polygon points="3.85,159.67 3.85,182.82 -16.19,171.25" fill="#50b5a3" stroke="#2c343c" stroke-width="2.1"/><polygon points="-16.19,171.25 -16.19,194.40 3.85,182.82" fill="#5fd4b2" stroke="#2c343c" stroke-width="2.1"/><polygon points="3.85,182.82 3.85,205.97 -16.19,194.40" fill="#50b5a3" stroke="#2c343c" stroke-width="2.1"/><polygon points="-16.19,194.40 -16.19,217.55 3.85,205.97" fill="#5fd4b2" stroke="#2c343c" stroke-width="2.1"/><polygon points="3.85,205.97 3.85,229.12 -16.19,217.55" fill="#50b5a3" stroke="#2c343c" stroke-width="2.1"/><polygon points="-16.19,217.55 -16.19,240.70 3.85,229.12" fill="#5fd4b2" stroke="#2c343c" stroke-width="2.1"/><polygon points="3.85,229.12 3.85,252.28 -16.19,240.70" fill="#50b5a3" stroke="#2c343c" stroke-width="2.1"/><polygon points="3.85,-2.38 3.85,20.77 23.90,9.20" fill="#5fd4b2" stroke="#2c343c" stroke-width="2.1"/><polygon points="23.90,9.20 23.90,32.35 3.85,20.77" fill="#50b5a3" stroke="#2c343c" stroke-width="2.1"/><polygon points="3.85,20.78 3.85,43.92 23.90,32.35" fill="#5fd4b2" stroke="#2c343c" stroke-width="2.1"/><polygon points="23.90,32.35 23.90,55.50 3.85,43.92" fill="#50b5a3" stroke="#2c343c" stroke-width="2.1"/><polygon points="3.85,43.93 3.85,67.08 23.90,55.50" fill="#5fd4b2" stroke="#2c343c" stroke-width="2.1"/><polygon points="23.90,55.50 23.90,78.65 3.85,67.08" fill="#50b5a3" stroke="#2c343c" stroke-width="2.1"/><polygon points="3.85,67.08 3.85,90.22 23.90,78.65" fill="#5fd4b2" stroke="#2c343c" stroke-width="2.1"/><polygon points="23.90,78.65 23.90,101.80 3.85,90.22" fill="#50b5a3" stroke="#2c343c" stroke-width="2.1"/><polygon points="3.85,90.23 3.85,113.38 23.90,101.80" fill="#5fd4b2" stroke="#2c343c" stroke-width="2.1"/><polygon points="23.90,101.80 23.90,124.95 3.85,113.38" fill="#50b5a3" stroke="#2c343c" stroke-width="2.1"/><polygon points="3.85,113.38 3.85,136.53 23.90,124.95" fill="#5fd4b2" stroke="#2c343c" stroke-width="2.1"/><polygon points="23.90,124.95 23.90,148.10 3.85,136.53" fill="#50b5a3" stroke="#2c343c" stroke-width="2.1"/><polygon points="3.85,136.52 3.85,159.67 23.90,148.10" fill="#5fd4b2" stroke="#2c343c" stroke-width="2.1"/><polygon points="23.90,148.10 23.90,171.25 3.85,159.67" fill="#50b5a3" stroke="#2c343c" stroke-width="2.1"/><polygon points="3.85,159.67 3.85,182.82 23.90,171.25" fill="#5fd4b2" stroke="#2c343c" stroke-width="2.1"/><polygon points="23.90,171.25 23.90,194.40 3.85,182.82" fill="#50b5a3" stroke="#2c343c" stroke-width="2.1"/><polygon points="3.85,182.82 3.85,205.97 23.90,194.40" fill="#5fd4b2" stroke="#2c343c" stroke-width="2.1"/><polygon points="23.90,194.40 23.90,217.55 3.85,205.97" fill="#50b5a3" stroke="#2c343c" stroke-width="2.1"/><polygon points="3.85,205.97 3.85,229.12 23.90,217.55" fill="#5fd4b2" stroke="#2c343c" stroke-width="2.1"/><polygon points="23.90,217.55 23.90,240.70 3.85,229.12" fill="#50b5a3" stroke="#2c343c" stroke-width="2.1"/><polygon points="3.85,229.12 3.85,252.28 23.90,240.70" fill="#5fd4b2" stroke="#2c343c" stroke-width="2.1"/><polygon points="23.90,240.70 23.90,263.85 3.85,252.28" fill="#50b5a3" stroke="#2c343c" stroke-width="2.1"/><polygon points="23.90,-13.95 23.90,9.20 43.95,-2.38" fill="#5fd4b2" stroke="#2c343c" stroke-width="2.1"/><polygon points="43.95,-2.38 43.95,20.77 23.90,9.20" fill="#50b5a3" stroke="#2c343c" stroke-width="2.1"/><polygon points="23.90,9.20 23.90,32.35 43.95,20.78" fill="#5fd4b2" stroke="#2c343c" stroke-width="2.1"/><polygon points="43.95,20.78 43.95,43.92 23.90,32.35" fill="#50b5a3" stroke="#2c343c" stroke-width="2.1"/><polygon points="23.90,32.35 23.90,55.50 43.95,43.93" fill="#5fd4b2" stroke="#2c343c" stroke-width="2.1"/><polygon points="43.95,43.93 43.95,67.08 23.90,55.50" fill="#50b5a3" stroke="#2c343c" stroke-width="2.1"/><polygon points="23.90,55.50 23.90,78.65 43.95,67.08" fill="#5fd4b2" stroke="#2c343c" stroke-width="2.1"/><polygon points="43.95,67.08 43.95,90.22 23.90,78.65" fill="#50b5a3" stroke="#2c343c" stroke-width="2.1"/><polygon points="23.90,78.65 23.90,101.80 43.95,90.23" fill="#5fd4b2" stroke="#2c343c" stroke-width="2.1"/><polygon points="43.95,90.23 43.95,113.38 23.90,101.80" fill="#50b5a3" stroke="#2c343c" stroke-width="2.1"/><polygon points="23.90,101.80 23.90,124.95 43.95,113.38" fill="#5fd4b2" stroke="#2c343c" stroke-width="2.1"/><polygon points="43.95,113.38 43.95,136.52 23.90,124.95" fill="#50b5a3" stroke="#2c343c" stroke-width="2.1"/><polygon points="23.90,124.95 23.90,148.10 43.95,136.52" fill="#5fd4b2" stroke="#2c343c" stroke-width="2.1"/><polygon points="43.95,136.52 43.95,159.67 23.90,148.10" fill="#50b5a3" stroke="#2c343c" stroke-width="2.1"/><polygon points="23.90,148.10 23.90,171.25 43.95,159.67" fill="#5fd4b2" stroke="#2c343c" stroke-width="2.1"/><polygon points="43.95,159.67 43.95,182.82 23.90,171.25" fill="#50b5a3" stroke="#2c343c" stroke-width="2.1"/><polygon points="23.90,171.25 23.90,194.40 43.95,182.82" fill="#5fd4b2" stroke="#2c343c" stroke-width="2.1"/><polygon points="43.95,182.82 43.95,205.97 23.90,194.40" fill="#50b5a3" stroke="#2c343c" stroke-width="2.1"/><polygon points="23.90,194.40 23.90,217.55 43.95,205.97" fill="#5fd4b2" stroke="#2c343c" stroke-width="2.1"/><polygon points="43.95,205.97 43.95,229.12 23.90,217.55" fill="#50b5a3" stroke="#2c343c" stroke-width="2.1"/><polygon points="23.90,217.55 23.90,240.70 43.95,229.12" fill="#5fd4b2" stroke="#2c343c" stroke-width="2.1"/><polygon points="43.95,229.12 43.95,252.28 23.90,240.70" fill="#50b5a3" stroke="#2c343c" stroke-width="2.1"/><polygon points="43.95,-2.38 43.95,20.77 64.00,9.20" fill="#5fd4b2" stroke="#2c343c" stroke-width="2.1"/><polygon points="64.00,9.20 64.00,32.35 43.95,20.77" fill="#50b5a3" stroke="#2c343c" stroke-width="2.1"/><polygon points="43.95,20.78 43.95,43.92 64.00,32.35" fill="#5fd4b2" stroke="#2c343c" stroke-width="2.1"/><polygon points="64.00,32.35 64.00,55.50 43.95,43.92" fill="#50b5a3" stroke="#2c343c" stroke-width="2.1"/><polygon points="43.95,43.93 43.95,67.08 64.00,55.50" fill="#5fd4b2" stroke="#2c343c" stroke-width="2.1"/><polygon points="64.00,55.50 64.00,78.65 43.95,67.08" fill="#50b5a3" stroke="#2c343c" stroke-width="2.1"/><polygon points="43.95,67.08 43.95,90.22 64.00,78.65" fill="#5fd4b2" stroke="#2c343c" stroke-width="2.1"/><polygon points="64.00,78.65 64.00,101.80 43.95,90.22" fill="#50b5a3" stroke="#2c343c" stroke-width="2.1"/><polygon points="43.95,90.23 43.95,113.38 64.00,101.80" fill="#5fd4b2" stroke="#2c343c" stroke-width="2.1"/><polygon points="64.00,101.80 64.00,124.95 43.95,113.38" fill="#50b5a3" stroke="#2c343c" stroke-width="2.1"/><polygon points="43.95,113.38 43.95,136.53 64.00,124.95" fill="#5fd4b2" stroke="#2c343c" stroke-width="2.1"/><polygon points="64.00,124.95 64.00,148.10 43.95,136.53" fill="#50b5a3" stroke="#2c343c" stroke-width="2.1"/><polygon points="43.95,136.52 43.95,159.67 64.00,148.10" fill="#5fd4b2" stroke="#2c343c" stroke-width="2.1"/><polygon points="64.00,148.10 64.00,171.25 43.95,159.67" fill="#50b5a3" stroke="#2c343c" stroke-width="2.1"/><polygon points="43.95,159.67 43.95,182.82 64.00,171.25" fill="#5fd4b2" stroke="#2c343c" stroke-width="2.1"/><polygon points="64.00,171.25 64.00,194.40 43.95,182.82" fill="#50b5a3" stroke="#2c343c" stroke-width="2.1"/><polygon points="43.95,182.82 43.95,205.97 64.00,194.40" fill="#5fd4b2" stroke="#2c343c" stroke-width="2.1"/><polygon points="64.00,194.40 64.00,217.55 43.95,205.97" fill="#50b5a3" stroke="#2c343c" stroke-width="2.1"/><polygon points="43.95,205.97 43.95,229.12 64.00,217.55" fill="#5fd4b2" stroke="#2c343c" stroke-width="2.1"/><polygon points="64.00,217.55 64.00,240.70 43.95,229.12" fill="#50b5a3" stroke="#2c343c" stroke-width="2.1"/><polygon points="43.95,229.12 43.95,252.28 64.00,240.70" fill="#5fd4b2" stroke="#2c343c" stroke-width="2.1"/><polygon points="64.00,240.70 64.00,263.85 43.95,252.28" fill="#50b5a3" stroke="#2c343c" stroke-width="2.1"/><polygon points="64.00,-13.95 64.00,9.20 84.05,-2.38" fill="#5fd4b2" stroke="#2c343c" stroke-width="2.1"/><polygon points="84.05,-2.38 84.05,20.77 64.00,9.20" fill="#50b5a3" stroke="#2c343c" stroke-width="2.1"/><polygon points="64.00,9.20 64.00,32.35 84.05,20.78" fill="#5fd4b2" stroke="#2c343c" stroke-width="2.1"/><polygon points="84.05,20.78 84.05,43.92 64.00,32.35" fill="#50b5a3" stroke="#2c343c" stroke-width="2.1"/><polygon points="64.00,32.35 64.00,55.50 84.05,43.93" fill="#5fd4b2" stroke="#2c343c" stroke-width="2.1"/><polygon points="84.05,43.93 84.05,67.08 64.00,55.50" fill="#50b5a3" stroke="#2c343c" stroke-width="2.1"/><polygon points="64.00,55.50 64.00,78.65 84.05,67.08" fill="#5fd4b2" stroke="#2c343c" stroke-width="2.1"/><polygon points="84.05,67.08 84.05,90.22 64.00,78.65" fill="#50b5a3" stroke="#2c343c" stroke-width="2.1"/><polygon points="64.00,78.65 64.00,101.80 84.05,90.23" fill="#5fd4b2" stroke="#2c343c" stroke-width="2.1"/><polygon points="84.05,90.23 84.05,113.38 64.00,101.80" fill="#50b5a3" stroke="#2c343c" stroke-width="2.1"/><polygon points="64.00,101.80 64.00,124.95 84.05,113.38" fill="#5fd4b2" stroke="#2c343c" stroke-width="2.1"/><polygon points="84.05,113.38 84.05,136.52 64.00,124.95" fill="#50b5a3" stroke="#2c343c" stroke-width="2.1"/><polygon points="64.00,124.95 64.00,148.10 84.05,136.52" fill="#5fd4b2" stroke="#2c343c" stroke-width="2.1"/><polygon points="84.05,136.52 84.05,159.67 64.00,148.10" fill="#50b5a3" stroke="#2c343c" stroke-width="2.1"/><polygon points="64.00,148.10 64.00,171.25 84.05,159.67" fill="#5fd4b2" stroke="#2c343c" stroke-width="2.1"/><polygon points="84.05,159.67 84.05,182.82 64.00,171.25" fill="#50b5a3" stroke="#2c343c" stroke-width="2.1"/><polygon points="64.00,171.25 64.00,194.40 84.05,182.82" fill="#5fd4b2" stroke="#2c343c" stroke-width="2.1"/><polygon points="84.05,182.82 84.05,205.97 64.00,194.40" fill="#50b5a3" stroke="#2c343c" stroke-width="2.1"/><polygon points="64.00,194.40 64.00,217.55 84.05,205.97" fill="#5fd4b2" stroke="#2c343c" stroke-width="2.1"/><polygon points="84.05,205.97 84.05,229.12 64.00,217.55" fill="#50b5a3" stroke="#2c343c" stroke-width="2.1"/><polygon points="64.00,217.55 64.00,240.70 84.05,229.12" fill="#5fd4b2" stroke="#2c343c" stroke-width="2.1"/><polygon points="84.05,229.12 84.05,252.28 64.00,240.70" fill="#50b5a3" stroke="#2c343c" stroke-width="2.1"/><polygon points="84.05,-2.38 84.05,20.77 104.10,9.20" fill="#5fd4b2" stroke="#2c343c" stroke-width="2.1"/><polygon points="104.10,9.20 104.10,32.35 84.05,20.77" fill="#50b5a3" stroke="#2c343c" stroke-width="2.1"/><polygon points="84.05,20.78 84.05,43.92 104.10,32.35" fill="#5fd4b2" stroke="#2c343c" stroke-width="2.1"/><polygon points="104.10,32.35 104.10,55.50 84.05,43.92" fill="#50b5a3" stroke="#2c343c" stroke-width="2.1"/><polygon points="84.05,43.93 84.05,67.08 104.10,55.50" fill="#5fd4b2" stroke="#2c343c" stroke-width="2.1"/><polygon points="104.10,55.50 104.10,78.65 84.05,67.08" fill="#50b5a3" stroke="#2c343c" stroke-width="2.1"/><polygon points="84.05,67.08 84.05,90.22 104.10,78.65" fill="#5fd4b2" stroke="#2c343c" stroke-width="2.1"/><polygon points="104.10,78.65 104.10,101.80 84.05,90.22" fill="#50b5a3" stroke="#2c343c" stroke-width="2.1"/><polygon points="84.05,90.23 84.05,113.38 104.10,101.80" fill="#5fd4b2" stroke="#2c343c" stroke-width="2.1"/><polygon points="104.10,101.80 104.10,124.95 84.05,113.38" fill="#50b5a3" stroke="#2c343c" stroke-width="2.1"/><polygon points="84.05,113.38 84.05,136.53 104.10,124.95" fill="#5fd4b2" stroke="#2c343c" stroke-width="2.1"/><polygon points="104.10,124.95 104.10,148.10 84.05,136.53" fill="#50b5a3" stroke="#2c343c" stroke-width="2.1"/><polygon points="84.05,136.52 84.05,159.67 104.10,148.10" fill="#5fd4b2" stroke="#2c343c" stroke-width="2.1"/><polygon points="104.10,148.10 104.10,171.25 84.05,159.67" fill="#50b5a3" stroke="#2c343c" stroke-width="2.1"/><polygon points="84.05,159.67 84.05,182.82 104.10,171.25" fill="#5fd4b2" stroke="#2c343c" stroke-width="2.1"/><polygon points="104.10,171.25 104.10,194.40 84.05,182.82" fill="#50b5a3" stroke="#2c343c" stroke-width="2.1"/><polygon points="84.05,182.82 84.05,205.97 104.10,194.40" fill="#5fd4b2" stroke="#2c343c" stroke-width="2.1"/><polygon points="104.10,194.40 104.10,217.55 84.05,205.97" fill="#50b5a3" stroke="#2c343c" stroke-width="2.1"/><polygon points="84.05,205.97 84.05,229.12 104.10,217.55" fill="#5fd4b2" stroke="#2c343c" stroke-width="2.1"/><polygon points="104.10,217.55 104.10,240.70 84.05,229.12" fill="#50b5a3" stroke="#2c343c" stroke-width="2.1"/><polygon points="84.05,229.12 84.05,252.28 104.10,240.70" fill="#5fd4b2" stroke="#2c343c" stroke-width="2.1"/><polygon points="104.10,240.70 104.10,263.85 84.05,252.28" fill="#50b5a3" stroke="#2c343c" stroke-width="2.1"/><polygon points="104.10,-13.95 104.10,9.20 124.15,-2.38" fill="#5fd4b2" stroke="#2c343c" stroke-width="2.1"/><polygon points="124.15,-2.38 124.15,20.77 104.10,9.20" fill="#50b5a3" stroke="#2c343c" stroke-width="2.1"/><polygon points="104.10,9.20 104.10,32.35 124.15,20.78" fill="#5fd4b2" stroke="#2c343c" stroke-width="2.1"/><polygon points="124.15,20.78 124.15,43.92 104.10,32.35" fill="#50b5a3" stroke="#2c343c" stroke-width="2.1"/><polygon points="104.10,32.35 104.10,55.50 124.15,43.93" fill="#5fd4b2" stroke="#2c343c" stroke-width="2.1"/><polygon points="124.15,43.93 124.15,67.08 104.10,55.50" fill="#50b5a3" stroke="#2c343c" stroke-width="2.1"/><polygon points="104.10,55.50 104.10,78.65 124.15,67.08" fill="#5fd4b2" stroke="#2c343c" stroke-width="2.1"/><polygon points="124.15,67.08 124.15,90.22 104.10,78.65" fill="#50b5a3" stroke="#2c343c" stroke-width="2.1"/><polygon points="104.10,78.65 104.10,101.80 124.15,90.23" fill="#5fd4b2" stroke="#2c343c" stroke-width="2.1"/><polygon points="124.15,90.23 124.15,113.38 104.10,101.80" fill="#50b5a3" stroke="#2c343c" stroke-width="2.1"/><polygon points="104.10,101.80 104.10,124.95 124.15,113.38" fill="#5fd4b2" stroke="#2c343c" stroke-width="2.1"/><polygon points="124.15,113.38 124.15,136.52 104.10,124.95" fill="#50b5a3" stroke="#2c343c" stroke-width="2.1"/><polygon points="104.10,124.95 104.10,148.10 124.15,136.52" fill="#5fd4b2" stroke="#2c343c" stroke-width="2.1"/><polygon points="124.15,136.52 124.15,159.67 104.10,148.10" fill="#50b5a3" stroke="#2c343c" stroke-width="2.1"/><polygon points="104.10,148.10 104.10,171.25 124.15,159.67" fill="#5fd4b2" stroke="#2c343c" stroke-width="2.1"/><polygon points="124.15,159.67 124.15,182.82 104.10,171.25" fill="#50b5a3" stroke="#2c343c" stroke-width="2.1"/><polygon points="104.10,171.25 104.10,194.40 124.15,182.82" fill="#5fd4b2" stroke="#2c343c" stroke-width="2.1"/><polygon points="124.15,182.82 124.15,205.97 104.10,194.40" fill="#50b5a3" stroke="#2c343c" stroke-width="2.1"/><polygon points="104.10,194.40 104.10,217.55 124.15,205.97" fill="#5fd4b2" stroke="#2c343c" stroke-width="2.1"/><polygon points="124.15,205.97 124.15,229.12 104.10,217.55" fill="#50b5a3" stroke="#2c343c" stroke-width="2.1"/><polygon points="104.10,217.55 104.10,240.70 124.15,229.12" fill="#5fd4b2" stroke="#2c343c" stroke-width="2.1"/><polygon points="124.15,229.12 124.15,252.28 104.10,240.70" fill="#50b5a3" stroke="#2c343c" stroke-width="2.1"/><polygon points="124.15,-2.38 124.15,20.77 144.19,9.20" fill="#5fd4b2" stroke="#2c343c" stroke-width="2.1"/><polygon points="144.19,9.20 144.19,32.35 124.15,20.77" fill="#50b5a3" stroke="#2c343c" stroke-width="2.1"/><polygon points="124.15,20.78 124.15,43.92 144.19,32.35" fill="#5fd4b2" stroke="#2c343c" stroke-width="2.1"/><polygon points="144.19,32.35 144.19,55.50 124.15,43.92" fill="#50b5a3" stroke="#2c343c" stroke-width="2.1"/><polygon points="124.15,43.93 124.15,67.08 144.19,55.50" fill="#5fd4b2" stroke="#2c343c" stroke-width="2.1"/><polygon points="144.19,55.50 144.19,78.65 124.15,67.08" fill="#50b5a3" stroke="#2c343c" stroke-width="2.1"/><polygon points="124.15,67.08 124.15,90.22 144.19,78.65" fill="#5fd4b2" stroke="#2c343c" stroke-width="2.1"/><polygon points="144.19,78.65 144.19,101.80 124.15,90.22" fill="#50b5a3" stroke="#2c343c" stroke-width="2.1"/><polygon points="124.15,90.23 124.15,113.38 144.19,101.80" fill="#5fd4b2" stroke="#2c343c" stroke-width="2.1"/><polygon points="144.19,101.80 144.19,124.95 124.15,113.38" fill="#50b5a3" stroke="#2c343c" stroke-width="2.1"/><polygon points="124.15,113.38 124.15,136.53 144.19,124.95" fill="#5fd4b2" stroke="#2c343c" stroke-width="2.1"/><polygon points="144.19,124.95 144.19,148.10 124.15,136.53" fill="#50b5a3" stroke="#2c343c" stroke-width="2.1"/><polygon points="124.15,136.52 124.15,159.67 144.19,148.10" fill="#5fd4b2" stroke="#2c343c" stroke-width="2.1"/><polygon points="144.19,148.10 144.19,171.25 124.15,159.67" fill="#50b5a3" stroke="#2c343c" stroke-width="2.1"/><polygon points="124.15,159.67 124.15,182.82 144.19,171.25" fill="#5fd4b2" stroke="#2c343c" stroke-width="2.1"/><polygon points="144.19,171.25 144.19,194.40 124.15,182.82" fill="#50b5a3" stroke="#2c343c" stroke-width="2.1"/><polygon points="124.15,182.82 124.15,205.97 144.19,194.40" fill="#5fd4b2" stroke="#2c343c" stroke-width="2.1"/><polygon points="144.19,194.40 144.19,217.55 124.15,205.97" fill="#50b5a3" stroke="#2c343c" stroke-width="2.1"/><polygon points="124.15,205.97 124.15,229.12 144.19,217.55" fill="#5fd4b2" stroke="#2c343c" stroke-width="2.1"/><polygon points="144.19,217.55 144.19,240.70 124.15,229.12" fill="#50b5a3" stroke="#2c343c" stroke-width="2.1"/><polygon points="124.15,229.12 124.15,252.28 144.19,240.70" fill="#5fd4b2" stroke="#2c343c" stroke-width="2.1"/><polygon points="144.19,240.70 144.19,263.85 124.15,252.28" fill="#50b5a3" stroke="#2c343c" stroke-width="2.1"/><polygon points="144.19,-13.95 144.19,9.20 164.24,-2.38" fill="#5fd4b2" stroke="#2c343c" stroke-width="2.1"/><polygon points="164.24,-2.38 164.24,20.77 144.19,9.20" fill="#50b5a3" stroke="#2c343c" stroke-width="2.1"/><polygon points="144.19,9.20 144.19,32.35 164.24,20.78" fill="#5fd4b2" stroke="#2c343c" stroke-width="2.1"/><polygon points="164.24,20.78 164.24,43.92 144.19,32.35" fill="#50b5a3" stroke="#2c343c" stroke-width="2.1"/><polygon points="144.19,32.35 144.19,55.50 164.24,43.93" fill="#5fd4b2" stroke="#2c343c" stroke-width="2.1"/><polygon points="164.24,43.93 164.24,67.08 144.19,55.50" fill="#50b5a3" stroke="#2c343c" stroke-width="2.1"/><polygon points="144.19,55.50 144.19,78.65 164.24,67.08" fill="#5fd4b2" stroke="#2c343c" stroke-width="2.1"/><polygon points="164.24,67.08 164.24,90.22 144.19,78.65" fill="#50b5a3" stroke="#2c343c" stroke-width="2.1"/><polygon points="144.19,78.65 144.19,101.80 164.24,90.23" fill="#5fd4b2" stroke="#2c343c" stroke-width="2.1"/><polygon points="164.24,90.23 164.24,113.38 144.19,101.80" fill="#50b5a3" stroke="#2c343c" stroke-width="2.1"/><polygon points="144.19,101.80 144.19,124.95 164.24,113.38" fill="#5fd4b2" stroke="#2c343c" stroke-width="2.1"/><polygon points="164.24,113.38 164.24,136.52 144.19,124.95" fill="#50b5a3" stroke="#2c343c" stroke-width="2.1"/><polygon points="144.19,124.95 144.19,148.10 164.24,136.52" fill="#5fd4b2" stroke="#2c343c" stroke-width="2.1"/><polygon points="164.24,136.52 164.24,159.67 144.19,148.10" fill="#50b5a3" stroke="#2c343c" stroke-width="2.1"/><polygon points="144.19,148.10 144.19,171.25 164.24,159.67" fill="#5fd4b2" stroke="#2c343c" stroke-width="2.1"/><polygon points="164.24,159.67 164.24,182.82 144.19,171.25" fill="#50b5a3" stroke="#2c343c" stroke-width="2.1"/><polygon points="144.19,171.25 144.19,194.40 164.24,182.82" fill="#5fd4b2" stroke="#2c343c" stroke-width="2.1"/><polygon points="164.24,182.82 164.24,205.97 144.19,194.40" fill="#50b5a3" stroke="#2c343c" stroke-width="2.1"/><polygon points="144.19,194.40 144.19,217.55 164.24,205.97" fill="#5fd4b2" stroke="#2c343c" stroke-width="2.1"/><polygon points="164.24,205.97 164.24,229.12 144.19,217.55" fill="#50b5a3" stroke="#2c343c" stroke-width="2.1"/><polygon points="144.19,217.55 144.19,240.70 164.24,229.12" fill="#5fd4b2" stroke="#2c343c" stroke-width="2.1"/><polygon points="164.24,229.12 164.24,252.28 144.19,240.70" fill="#50b5a3" stroke="#2c343c" stroke-width="2.1"/></g><g transform="translate(50.5 200.6) scale(1.697)"><path d="M3 13h8V3H3v10zm0 8h8v-6H3v6zm10 0h8V11h-8v10zm0-18v6h8V3h-8z" fill="#fff"/></g><path fill-rule="evenodd" fill="#d3d5d7" stroke="#d3d5d7" stroke-width="1.2" stroke-linejoin="round" d="M67.54,306.31L67.10,309.94L61.80,309.94L61.36,306.31L57.76,304.23L54.40,305.66L51.75,301.07L54.67,298.88L54.67,294.72L51.75,292.53L54.40,287.94L57.76,289.37L61.36,287.29L61.80,283.66L67.10,283.66L67.54,287.29L71.14,289.37L74.50,287.94L77.15,292.53L74.23,294.72L74.23,298.88L77.15,301.07L74.50,305.66L71.14,304.23ZM68.85,296.80a4.4,4.4 0 1 0 -8.8,0a4.4,4.4 0 1 0 8.8,0Z"/><path fill-rule="evenodd" fill="#d3d5d7" stroke="#d3d5d7" stroke-width="0.8" stroke-linejoin="round" d="M85.71,292.36L85.54,294.37L82.86,294.37L82.69,292.36L80.92,291.34L79.10,292.20L77.76,289.87L79.41,288.72L79.41,286.68L77.76,285.53L79.10,283.20L80.92,284.06L82.69,283.04L82.86,281.03L85.54,281.03L85.71,283.04L87.48,284.06L89.30,283.20L90.64,285.53L88.99,286.68L88.99,288.72L90.64,289.87L89.30,292.20L87.48,291.34ZM86.30,287.70a2.1,2.1 0 1 0 -4.2,0a2.1,2.1 0 1 0 4.2,0ZM85.71,310.96L85.54,312.97L82.86,312.97L82.69,310.96L80.92,309.94L79.10,310.80L77.76,308.47L79.41,307.32L79.41,305.28L77.76,304.13L79.10,301.80L80.92,302.66L82.69,301.64L82.86,299.63L85.54,299.63L85.71,301.64L87.48,302.66L89.30,301.80L90.64,304.13L88.99,305.28L88.99,307.32L90.64,308.47L89.30,310.80L87.48,309.94ZM86.30,306.30a2.1,2.1 0 1 0 -4.2,0a2.1,2.1 0 1 0 4.2,0Z"/><g><path d="M82.5 361.8L60 384.5" stroke="#fff" stroke-width="4.3"/><circle cx="82.5" cy="361.8" r="5.8" fill="#fff"/><circle cx="60" cy="384.5" r="5.8" fill="#fff"/><circle cx="82.5" cy="361.8" r="2.7" fill="#2c343c"/><circle cx="60" cy="384.5" r="2.7" fill="#2c343c"/><path d="M65 367L78 380" stroke="#2c343c" stroke-width="8.2"/><path d="M59.5 361.5L82.9 384.9" stroke="#fff" stroke-width="5.8"/><circle cx="59.5" cy="361.5" r="5.9" fill="#fff"/><circle cx="82.9" cy="384.9" r="5.9" fill="#fff"/><path d="M59.2 361.2L53 355" stroke="#2c343c" stroke-width="3.7"/><path d="M83.2 385.2L89.5 391.5" stroke="#2c343c" stroke-width="3.7"/></g><path d="M49.7 444.6Q70 424.6 92.8 439.6L91 442.8Q82 437 72 435.2Q60 434.6 50 444.9Z" fill="#c8c8c8"/><path d="M75.4 439.6L68.9 448.6" stroke="#c8c8c8" stroke-width="1.3"/><circle cx="68.2" cy="449.6" r="1.5" fill="none" stroke="#c8c8c8" stroke-width="1"/><path d="M67.6 528.9V512.9A16 16 0 1 0 83.3 531.8Z" fill="#d8d8d8"/><path d="M75 522.2V506A16.2 16.2 0 0 1 90.9 518.4Z" fill="#d8d8d8"/><g stroke="#8f9499" stroke-width="0.7" opacity=".75" clip-path="url(#pc)"><path d="M60 506v40M67.6 506v40M75 506v40M82.5 506v40M50 517l40 22M50 526l40 22M50 508l42 23M50 539l40-22M50 548l40-22M50 530l42-23M56 520l36-20"/></g><clipPath id="pc"><path d="M67.6 528.9V512.9A16 16 0 1 0 83.3 531.8Z"/><path d="M75 522.2V506A16.2 16.2 0 0 1 90.9 518.4Z"/></clipPath><polygon points="71,634 71.00,615.60 86.93,624.80" fill="#16b094" stroke="#2c343c" stroke-width="1.7" stroke-linejoin="miter"/><polygon points="71,634 86.93,624.80 86.93,643.20" fill="#1a9a84" stroke="#2c343c" stroke-width="1.7" stroke-linejoin="miter"/><polygon points="71,634 86.93,643.20 71.00,652.40" fill="#16b094" stroke="#2c343c" stroke-width="1.7" stroke-linejoin="miter"/><polygon points="71,634 71.00,652.40 55.07,643.20" fill="#1a9a84" stroke="#2c343c" stroke-width="1.7" stroke-linejoin="miter"/><polygon points="71,634 55.07,643.20 55.07,624.80" fill="#16b094" stroke="#2c343c" stroke-width="1.7" stroke-linejoin="miter"/><polygon points="71,634 55.07,624.80 71.00,615.60" fill="#1a9a84" stroke="#2c343c" stroke-width="1.7" stroke-linejoin="miter"/><path d="M110.3 1231l14.6 13.5l-14.6 13.5" fill="none" stroke="#e6e8ea" stroke-width="5"/><circle cx="67.6" cy="1340.6" r="17" fill="#d3d5d7"/></svg><div class="t" style="left:59.30px;top:1327.72px;font-size:27.5px;color:#2c343c;font-weight:700;letter-spacing:0.000px;">?</div><div class="t" style="left:26.88px;top:1402.88px;font-size:22px;color:#e4e6e8;font-weight:400;letter-spacing:-0.537px;">v0.8.179</div><div class="a" style="left:2089.8px;top:363.6px;width:800.2px;height:1007.7px;background:#19262e;border-radius:12px;overflow:hidden;box-shadow:-8px 7px 24px 4px rgba(7,13,17,.9)"><div class="a" style="left:0;top:0;width:100%;height:128.2px;background:linear-gradient(100deg,#2d383f 0%,#39454d 45%,#404c55 100%)"></div><div class="a" style="left:32.2px;top:160.9px;width:724px;height:116.8px;background:#1b2b35"></div><div class="a" style="left:681.2px;top:182.2px;width:60px;height:74.5px;background:#22434a;border-radius:0 9px 9px 0"></div><div class="a" style="left:788.4px;top:128.4px;width:11.8px;height:627.5px;background:#7c7c7c;border-radius:6px"></div><div class="a" style="left:48.4px;top:693.4px;width:691.8px;height:64.6px;background:#20343b;border-bottom:2.5px solid #4fb3a1"></div><div class="a" style="left:54.4px;top:773.4px;width:166.8px;height:48px;background:#3e4951;border-radius:7px"></div><div class="a" style="left:54.4px;top:837.4px;width:679.6px;height:77.6px;background:#52b3a2;border-radius:7px"></div><div class="a" style="left:54.4px;top:931.4px;width:679.6px;height:90px;background:#3e4951;border-radius:7px"></div></div><div class="a" style="left:2849.4px;top:661.4px;width:70px;height:223px;background:#52b5a4;border-radius:9px"></div><svg class="a" style="left:0;top:0" width="2908" height="1468" viewBox="0 0 2908 1468"><g fill="#e8eaec"><circle cx="2501.8" cy="377.9" r="4"/><circle cx="2514" cy="377.9" r="4"/><circle cx="2526.2" cy="377.9" r="4"/></g><path d="M2805.4 415.8l25.2 24.6M2830.6 415.8l-25.2 24.6" stroke="#fff" stroke-width="3.7"/><g fill="#fff"><rect x="2162.5" y="568.5" width="17" height="7.6"/><rect x="2150.7" y="590.6" width="11.6" height="7.4"/><rect x="2165.2" y="590.6" width="11.6" height="7.4"/><rect x="2179.7" y="590.6" width="11.6" height="7.4"/><path d="M2169.9 578.6h2.2v5.2h2.5l-3.6 5l-3.6-5h2.5z"/><path d="M2164.3 578.8l1.5 1.5l-3.7 3.7l1.7 1.7l-6 1.1l1.2-5.9l1.6 1.7z"/><path d="M2177.7 578.8l-1.5 1.5l3.7 3.7l-1.7 1.7l6 1.1l-1.2-5.9l-1.6 1.7z"/></g><g fill="#d5dadd"><rect x="2735.1" y="568.1" width="3.9" height="3.6"/><rect x="2735.1" y="574.8" width="3.9" height="3.6"/><rect x="2735.1" y="581.5" width="3.9" height="3.6"/><rect x="2735.1" y="588.2" width="3.9" height="3.6"/><rect x="2742" y="568.1" width="7.4" height="3.6"/><rect x="2742" y="574.8" width="9" height="3.6"/><rect x="2742" y="581.5" width="7.4" height="3.6"/></g><g fill="#d5dadd"><rect x="2784.5" y="562.7" width="3.7" height="3.7"/><rect x="2791.6" y="562.7" width="25.4" height="3.7"/><rect x="2784.5" y="570.2" width="3.7" height="3.7"/><rect x="2791.6" y="570.2" width="25.4" height="3.7"/><rect x="2784.5" y="577.7" width="3.7" height="3.7"/><rect x="2791.6" y="577.7" width="25.4" height="3.7"/><rect x="2784.5" y="585.1" width="3.7" height="3.7"/><rect x="2791.6" y="585.1" width="25.4" height="3.7"/></g><path d="M2576.3 704v-6.4l19-19l6.4 6.4l-19 19zM2597.6 676.3l2.5-2.5c1.2-1.2 2.4-1.2 3.6 0l3 3c1.2 1.2 1.2 2.4 0 3.6l-2.6 2.5z" fill="#d5dadd"/><polygon points="2740.00,688.00 2731.97,671.16 2738.94,667.83 2746.23,670.41" fill="#d5dadd" stroke="#d5dadd" stroke-width="0.5"/><polygon points="2740.00,688.00 2746.23,670.41 2753.52,672.99 2756.84,679.97" fill="#d5dadd" stroke="#d5dadd" stroke-width="0.5"/><polygon points="2740.00,688.00 2756.84,679.97 2760.17,686.94 2757.59,694.23" fill="#d5dadd" stroke="#d5dadd" stroke-width="0.5"/><polygon points="2740.00,688.00 2757.59,694.23 2755.01,701.52 2748.03,704.84" fill="#d5dadd" stroke="#d5dadd" stroke-width="0.5"/><polygon points="2740.00,688.00 2748.03,704.84 2741.06,708.17 2733.77,705.59" fill="#d5dadd" stroke="#d5dadd" stroke-width="0.5"/><polygon points="2740.00,688.00 2733.77,705.59 2726.48,703.01 2723.16,696.03" fill="#d5dadd" stroke="#d5dadd" stroke-width="0.5"/><polygon points="2740.00,688.00 2723.16,696.03 2719.83,689.06 2722.41,681.77" fill="#d5dadd" stroke="#d5dadd" stroke-width="0.5"/><polygon points="2740.00,688.00 2722.41,681.77 2724.99,674.48 2731.97,671.16" fill="#d5dadd" stroke="#d5dadd" stroke-width="0.5"/><path d="M2747.34 669.83Q2754.16 683.15 2740.00 688.00Q2746.81 680.48 2743.31 670.95Z" fill="#19262e"/><path d="M2758.04 680.34Q2753.44 694.58 2740.00 688.00Q2750.14 687.50 2754.40 678.29Z" fill="#19262e"/><path d="M2758.17 695.34Q2744.85 702.16 2740.00 688.00Q2747.52 694.81 2757.05 691.31Z" fill="#19262e"/><path d="M2747.66 706.04Q2733.42 701.44 2740.00 688.00Q2740.50 698.14 2749.71 702.40Z" fill="#19262e"/><path d="M2732.66 706.17Q2725.84 692.85 2740.00 688.00Q2733.19 695.52 2736.69 705.05Z" fill="#19262e"/><path d="M2721.96 695.66Q2726.56 681.42 2740.00 688.00Q2729.86 688.50 2725.60 697.71Z" fill="#19262e"/><path d="M2721.83 680.66Q2735.15 673.84 2740.00 688.00Q2732.48 681.19 2722.95 684.69Z" fill="#19262e"/><path d="M2732.34 669.96Q2746.58 674.56 2740.00 688.00Q2739.50 677.86 2730.29 673.60Z" fill="#19262e"/><path d="M2816 675v17.5M2808.6 685.6l7.4 7.4l7.4-7.4" fill="none" stroke="#d5dadd" stroke-width="3.3"/><path d="M2804.2 693v6.4h23.6v-6.4" fill="none" stroke="#d5dadd" stroke-width="3.3"/><path d="M2795.5 1094.5l10.7-10.6l10.7 10.6" fill="none" stroke="#fff" stroke-width="3.8"/><path d="M2104.5 1348.5l24-23M2119 1325.2h9.6v9.6M2104.3 1339v9.6h9.6" fill="none" stroke="#fff" stroke-width="2.3"/></svg><div class="t" style="left:2211.44px;top:570.87px;font-size:28.5px;color:#d3d8db;font-weight:400;letter-spacing:-1.705px;">SERVICE-NODEPORT</div><div class="t" style="left:2139.78px;top:678.51px;font-size:32px;color:#ffffff;font-weight:400;letter-spacing:-0.530px;-webkit-text-stroke:0.55px #fff;">Age</div><div class="t" style="left:2138.78px;top:735.41px;font-size:32px;color:#86939a;font-weight:400;letter-spacing:-0.677px;-webkit-text-stroke:0.3px #86939a;">0 hours</div><div class="t" style="left:2137.78px;top:809.21px;font-size:32px;color:#ffffff;font-weight:400;letter-spacing:-0.753px;-webkit-text-stroke:0.55px #fff;">Kind</div><div class="t" style="left:2312.28px;top:809.21px;font-size:32px;color:#ffffff;font-weight:400;letter-spacing:-0.729px;-webkit-text-stroke:0.55px #fff;">ApiVersion</div><div class="t" style="left:2137.78px;top:865.11px;font-size:32px;color:#86939a;font-weight:400;letter-spacing:-0.220px;-webkit-text-stroke:0.3px #86939a;">Endpoints</div><div class="t" style="left:2312.28px;top:865.11px;font-size:32px;color:#86939a;font-weight:400;letter-spacing:0.000px;-webkit-text-stroke:0.3px #86939a;transform:scaleX(0.86);transform-origin:0 0;">v1</div><div class="t" style="left:2137.78px;top:938.61px;font-size:32px;color:#ffffff;font-weight:400;letter-spacing:-0.633px;">Namespace</div><div class="t" style="left:2138.78px;top:996.11px;font-size:32px;color:#5fcfa9;font-weight:400;letter-spacing:-0.227px;">default</div><div class="t" style="left:2137.84px;top:1073.76px;font-size:31px;color:#ffffff;font-weight:400;letter-spacing:-0.256px;">Labels</div><div class="t" style="left:2727.84px;top:1077.99px;font-size:26px;color:#ffffff;font-weight:400;letter-spacing:-1.040px;">(3)</div><div class="t" style="left:2161.04px;top:1148.79px;font-size:26px;color:#ffffff;font-weight:400;letter-spacing:-1.398px;">app=676767</div><div class="t" style="left:2161.04px;top:1208.49px;font-size:26px;color:#ffffff;font-weight:400;letter-spacing:0.164px;">design.meshery.io/id=0420d533-c722-4c1a-8195-</div><div class="t" style="left:2161.04px;top:1247.19px;font-size:26px;color:#ffffff;font-weight:400;letter-spacing:-1.098px;">c3d1c7a912eb</div><div class="t" style="left:2161.04px;top:1301.99px;font-size:26px;color:#ffffff;font-weight:400;letter-spacing:0.366px;">endpoints.kubernetes.io/managed-by=endpoint-</div><div class="t" style="left:2161.04px;top:1340.99px;font-size:26px;color:#ffffff;font-weight:400;letter-spacing:-0.009px;">controller</div><div class="a" style="left:2772px;top:1348px;width:100px;height:100px;border-radius:50%;background:#2f2f2f"></div><svg class="a" style="left:0;top:0" width="2908" height="1468" viewBox="0 0 2908 1468"><g stroke="#d5dadd" fill="none"><circle cx="2817" cy="1394.4" r="10.6" stroke-width="3.6"/><path d="M2825.6 1403l12 11" stroke-width="4.2"/><path d="M2812 1394.4h10M2817 1389.4v10" stroke-width="2.2"/></g></svg><div class="t" style="left:2873.40px;top:845.00px;font-size:32.6px;color:#fff;letter-spacing:-0.143px;transform-origin:0 0;transform:rotate(-90deg)">Feedback</div><div class="a" style="left:0;top:0;width:2908px;height:2px;background:#3b3b3b"></div><div class="a" style="left:0;top:1.9px;width:2908px;height:2.1px;background:#494b48"></div><div class="a" style="left:0;top:0;width:2px;height:4px;background:#6a6a6a"></div></div><svg class="a" style="left:0;top:0" width="2908" height="1468" viewBox="0 0 2908 1468"><path d="M1 1425V1432A31 31 0 0 0 32 1462.9H136" fill="none" stroke="#646c72" stroke-width="1.7"/><path d="M136 1462.9H2876.5A31 31 0 0 0 2907.4 1432V1425" fill="none" stroke="#575757" stroke-width="1.5"/></svg><div class="a" style="left:0;top:1446px;width:2.5px;height:22px;background:#2a4f42;z-index:-1"></div></body></html>
